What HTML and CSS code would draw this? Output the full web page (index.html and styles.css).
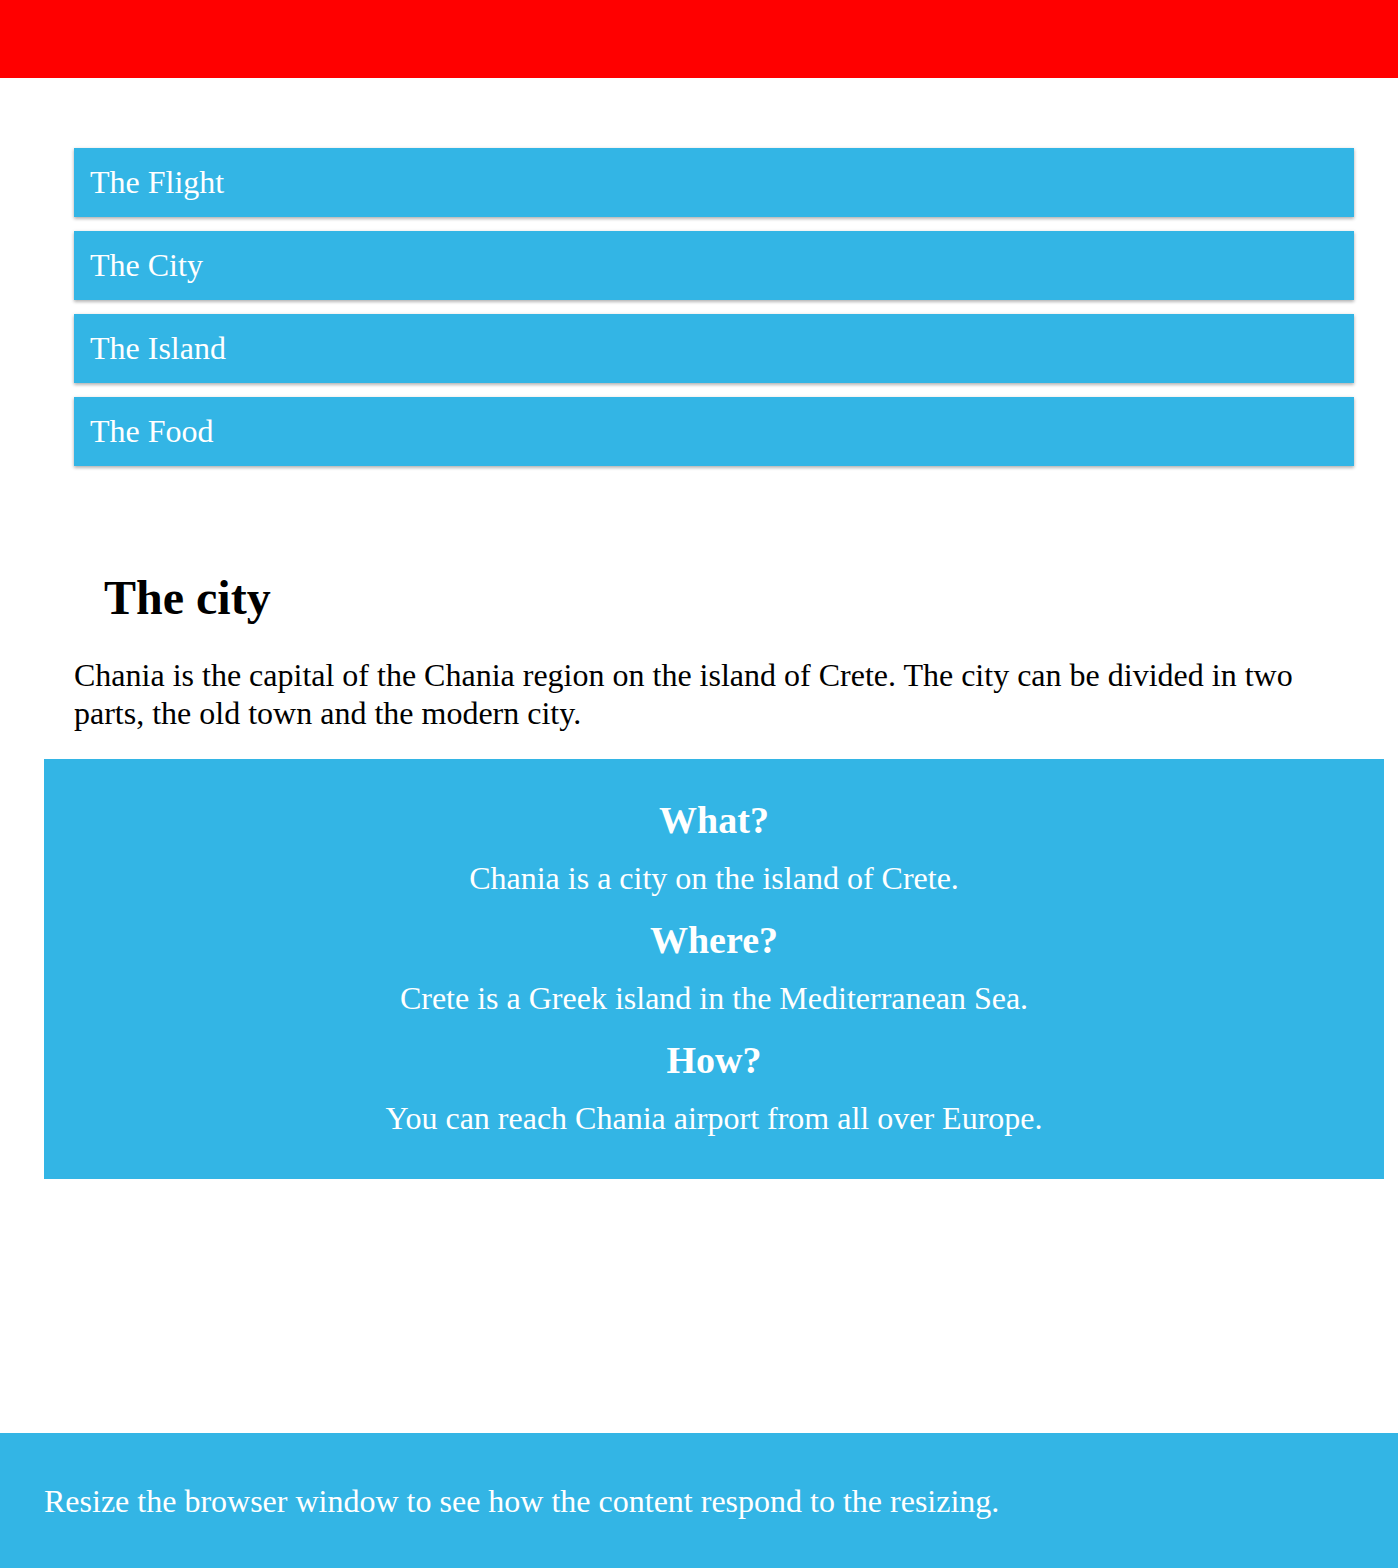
FILE: index.html
```
<!DOCTYPE html>
<html>
<head>
<meta charset="utf-8">
<title>Chania</title>
<link rel="stylesheet" href="styles.css">
</head>
<body>
<div class="header"></div>
<div class="page">
  <ul class="menu">
    <li class="menu-item">The Flight</li>
    <li class="menu-item">The City</li>
    <li class="menu-item">The Island</li>
    <li class="menu-item">The Food</li>
  </ul>
  <div class="main">
    <h1 class="title">The city</h1>
    <p class="intro">Chania is the capital of the Chania region on the island of Crete. The city can be divided in two parts, the old town and the modern city.</p>
  </div>
  <div class="aside">
    <h2 class="aside-title">What?</h2>
    <p class="aside-text">Chania is a city on the island of Crete.</p>
    <h2 class="aside-title">Where?</h2>
    <p class="aside-text">Crete is a Greek island in the Mediterranean Sea.</p>
    <h2 class="aside-title">How?</h2>
    <p class="aside-text">You can reach Chania airport from all over Europe.</p>
  </div>
</div>
<div class="footer">
  <p class="footer-text">Resize the browser window to see how the content respond to the resizing.</p>
</div>
</body>
</html>
```
FILE: styles.css
```
html, body {
  margin: 0;
  padding: 0;
}
body {
  font-family: "Liberation Serif", "Times New Roman", serif;
  color: #000;
  background: #fff;
}
.header {
  background-color: #ff0000;
  height: 78px;
}
.page {
  padding: 0 14px 0 44px;
}
.menu {
  list-style: none;
  margin: 70px 0 0 30px;
  padding: 0;
  width: 1280px;
  display: flex;
  flex-direction: column;
  gap: 14px;
}
.menu-item {
  background-color: #33b5e5;
  color: #fff;
  font-size: 32px;
  line-height: 37px;
  padding: 16px;
  box-shadow: 0 1px 4px rgba(0,0,0,0.16), 0 2px 3px rgba(0,0,0,0.2);
}
.main {
  padding-left: 30px;
  margin-top: 103px;
}
.title {
  font-size: 48px;
  font-weight: bold;
  line-height: 58px;
  margin: 0;
  padding-left: 30px;
}
.intro {
  font-size: 32px;
  line-height: 38px;
  margin: 29px 0 0 0;
  padding-right: 40px;
}
.aside {
  background-color: #33b5e5;
  color: #fff;
  text-align: center;
  margin-top: 27px;
  width: 1340px;
  padding: 38px 0 22px;
}
.aside-title {
  font-size: 38px;
  line-height: 46px;
  font-weight: bold;
  margin: 0;
}
.aside-text {
  font-size: 32px;
  line-height: 37px;
  margin: 16.5px 0 20.5px;
}
.footer {
  background-color: #33b5e5;
  color: #fff;
  margin-top: 254px;
  padding: 50px 44px 48px;
}
.footer-text {
  font-size: 32px;
  line-height: 37px;
  margin: 0;
}
```
